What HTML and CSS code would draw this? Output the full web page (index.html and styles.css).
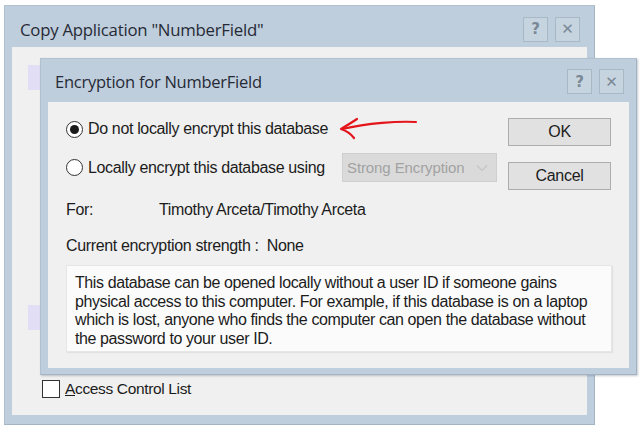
FILE: index.html
```html
<!DOCTYPE html>
<html lang="en">
<head>
    <meta charset="UTF-8">
    <meta name="viewport" content="width=device-width, initial-scale=1.0">
    <title>Encryption for NumberField</title>
    <link rel="stylesheet" href="styles.css">
</head>
<body>
    <div class="desktop">
        <!-- janela de fundo -->
        <div class="window outer">
            <div class="titlebar">
                <span class="title">Copy Application "NumberField"</span>
                <div class="tb-buttons">
                    <span class="tb-btn">?</span>
                    <span class="tb-btn">&#x2715;</span>
                </div>
            </div>
            <div class="client outer-client">
                <div class="list-sel first"></div>
                <div class="list-sel second"></div>
                <label class="check-row">
                    <span class="checkbox"></span>
                    <span><u>A</u>ccess Control List</span>
                </label>
            </div>
        </div>

        <!-- dialogo de criptografia -->
        <div class="window inner">
            <div class="titlebar">
                <span class="title">Encryption for NumberField</span>
                <div class="tb-buttons">
                    <span class="tb-btn">?</span>
                    <span class="tb-btn">&#x2715;</span>
                </div>
            </div>
            <div class="client inner-client">
                <div class="top-section">
                    <div class="options">
                        <div class="radio-row first-row">
                            <span class="radio checked"></span>
                            <span>Do not locally encrypt this database</span>
                        </div>
                        <div class="radio-row second-row">
                            <span class="radio"></span>
                            <span class="radio-label">Locally encrypt this database using</span>
                            <div class="combo">
                                <span>Strong Encryption</span>
                                <svg class="chevron" width="12" height="8" viewBox="0 0 12 8">
                                    <path d="M1 1.5 L6 6.5 L11 1.5" fill="none" stroke="#c4c4c4" stroke-width="1.2"/>
                                </svg>
                            </div>
                        </div>
                    </div>
                    <div class="actions">
                        <button class="btn">OK</button>
                        <button class="btn">Cancel</button>
                    </div>
                </div>

                <div class="info-row for-row">
                    <span class="info-label">For:</span>
                    <span>Timothy Arceta/Timothy Arceta</span>
                </div>
                <div class="info-row strength-row">
                    <span>Current encryption strength :&nbsp;&nbsp;None</span>
                </div>

                <div class="note">
                    This database can be opened locally without a user ID if someone gains<br>
                    physical access to this computer. For example, if this database is on a laptop<br>
                    which is lost, anyone who finds the computer can open the database without<br>
                    the password to your user ID.
                </div>

                <!-- seta vermelha de anotacao -->
                <svg class="arrow" width="84" height="24" viewBox="0 0 84 24">
                    <path d="M78 5 C60 4 30 6 4 12" fill="none" stroke="#e4141b" stroke-width="2.2" stroke-linecap="round"/>
                    <path d="M19 2 C13 6 8 9 3 12 C9 14 13 17 16 21" fill="none" stroke="#e4141b" stroke-width="2.2" stroke-linecap="round" stroke-linejoin="round"/>
                </svg>
            </div>
        </div>
    </div>
</body>
</html>
```

FILE: styles.css
```css
body {
    margin: 0;
    padding: 0;
    background-color: #ffffff;
    font-family: "Liberation Sans", Arial, sans-serif;
    color: #1c1c1c;
}

.desktop {
    position: relative;
    width: 643px;
    height: 430px;
    overflow: hidden;
}

.window {
    box-sizing: border-box;
    background-color: #bfcedc;
    border: 1px solid #b2c1cf;
    border-right-color: #a4b3c2;
    border-bottom-color: #a4b3c2;
    display: flex;
    flex-direction: column;
}

.outer {
    margin: 5px 0 0 4px;
    width: 591px;
    height: 420px;
    padding: 0 7px 9px 7px;
}

.inner {
    position: absolute;
    left: 40px;
    top: 58px;
    width: 597px;
    height: 317px;
    padding: 0 7px 6px 7px;
    box-shadow: 1px 1px 2px rgba(80, 100, 120, 0.35);
}

.titlebar {
    display: flex;
    align-items: center;
    justify-content: space-between;
    box-sizing: border-box;
}

.outer .titlebar {
    height: 41px;
    padding: 5px 7px 0 8px;
}

.inner .titlebar {
    height: 43px;
    padding: 2px 5px 0 7px;
}

.title {
    font-family: "Open Sans", sans-serif;
    font-size: 16.8px;
    color: #262a36;
    letter-spacing: -0.25px;
}

.inner .title {
    font-size: 16.5px;
}

.tb-buttons {
    display: flex;
    gap: 7px;
}

.tb-btn {
    box-sizing: border-box;
    width: 25px;
    height: 25px;
    border: 1px solid #a9b8c6;
    background-color: #c6d4e0;
    color: #7b8896;
    font-family: "DejaVu Sans", sans-serif;
    font-size: 15px;
    font-weight: bold;
    display: flex;
    align-items: center;
    justify-content: center;
}

.client {
    flex: 1;
    background-color: #f0f0f0;
    position: relative;
    font-size: 16px;
}

/* janela de fundo */
.outer-client {
    display: flex;
    flex-direction: column;
}

.list-sel {
    background-color: #e1def5;
    width: 300px;
    height: 25px;
    margin-left: 16px;
}

.list-sel.first {
    margin-top: 18px;
}

.list-sel.second {
    margin-top: 215px;
}

.check-row {
    display: flex;
    align-items: center;
    gap: 5px;
    margin: 50px 0 0 30px;
    height: 18px;
    font-size: 15.5px;
    letter-spacing: -0.35px;
}

.checkbox {
    box-sizing: border-box;
    width: 18px;
    height: 18px;
    border: 1px solid #333333;
    background-color: #ffffff;
}

/* dialogo */
.inner-client {
    padding: 14px 18px 0 18px;
    box-sizing: border-box;
}

.top-section {
    display: flex;
    justify-content: space-between;
    align-items: flex-start;
    height: 66px;
}

.radio-row {
    display: flex;
    align-items: center;
    gap: 5px;
    font-size: 16px;
    letter-spacing: -0.35px;
}

.first-row {
    height: 26px;
}

.second-row {
    height: 29px;
    margin-top: 11px;
}

.radio {
    box-sizing: border-box;
    width: 17px;
    height: 17px;
    border: 1px solid #333333;
    border-radius: 50%;
    background-color: #ffffff;
    display: flex;
    align-items: center;
    justify-content: center;
}

.radio.checked::after {
    content: "";
    width: 9px;
    height: 9px;
    border-radius: 50%;
    background-color: #1a1a1a;
}

.radio-label {
    width: 249px;
}

.combo {
    box-sizing: border-box;
    width: 155px;
    height: 29px;
    background-color: #dadada;
    border: 1px solid #cfcfcf;
    color: #a2a2a2;
    font-size: 15px;
    letter-spacing: -0.1px;
    display: flex;
    align-items: center;
    justify-content: space-between;
    padding: 0 8px 0 4px;
}

.actions {
    display: flex;
    flex-direction: column;
    gap: 16px;
    padding-top: 2px;
}

.btn {
    flex-shrink: 0;
    width: 103px;
    height: 28px;
    background-color: #e1e1e1;
    border: 1px solid #adadad;
    font-family: "Liberation Sans", Arial, sans-serif;
    font-size: 16px;
    letter-spacing: -0.3px;
    color: #1c1c1c;
    padding: 0;
}

.info-row {
    display: flex;
    align-items: center;
    height: 20px;
    font-size: 16px;
    letter-spacing: -0.35px;
}

.for-row {
    margin-top: 18px;
}

.strength-row {
    margin-top: 16px;
}

.info-label {
    width: 93px;
}

.note {
    box-sizing: border-box;
    margin-top: 9px;
    width: 546px;
    height: 87px;
    padding: 8px 8px 0 8px;
    background-color: #fbfbfb;
    border: 1px solid #e6e6e6;
    box-shadow: 1px 1px 1px rgba(0, 0, 0, 0.06);
    font-size: 16px;
    line-height: 18.6px;
    letter-spacing: -0.4px;
    white-space: nowrap;
}

.arrow {
    position: absolute;
    left: 290px;
    top: 15px;
}
```
